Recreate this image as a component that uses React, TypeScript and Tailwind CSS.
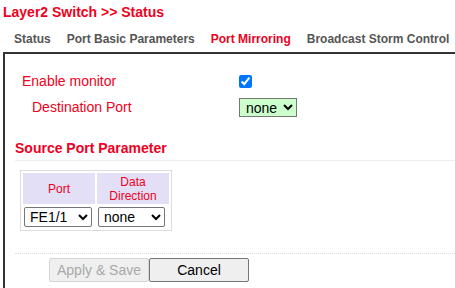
import { useState } from "react";

const tabs = [
  { label: "Status", active: false },
  { label: "Port Basic Parameters", active: false },
  { label: "Port Mirroring", active: true },
  { label: "Broadcast Storm Control", active: false },
];

export default function App() {
  const [enabled, setEnabled] = useState(true);

  return (
    <div className="w-[455px] h-[288px] overflow-hidden bg-white font-['Liberation_Sans',Arial,sans-serif]">
      <h1 className="pl-[3px] pt-[4px] text-[14px] font-bold leading-[17px] text-[#ee0022]">
        Layer2 Switch &gt;&gt; Status
      </h1>

      <div className="flex gap-[16px] pl-[14px] pt-[11px] text-[12px] font-bold leading-[15px] whitespace-nowrap">
        {tabs.map((t) => (
          <span key={t.label} className={t.active ? "text-[#ee0022]" : "text-[#555555]"}>
            {t.label}
          </span>
        ))}
      </div>

      <div className="ml-[3px] mt-[5px] w-[600px] h-[300px] border-l-2 border-t-2 border-[#333333]">
        <div className="pl-[17px] pt-[17px] text-[14px] text-[#ee0022]">
          <div className="flex items-center h-[20px]">
            <span className="w-[217px]">Enable monitor</span>
            <input
              type="checkbox"
              checked={enabled}
              onChange={(e) => setEnabled(e.target.checked)}
              className="m-0 w-[13px] h-[13px]"
            />
          </div>
          <div className="flex items-center h-[20px] mt-[6px]">
            <span className="w-[217px] pl-[10px]">Destination Port</span>
            <select className="h-[19px] w-[58px] border border-[#767676] bg-[#ccffcc] text-[14px] text-black pl-[2px]">
              <option>none</option>
            </select>
          </div>
        </div>

        <div className="mt-[23px] ml-[10px] pb-[3px] border-b border-[#eeeeee] text-[14px] font-bold text-[#ee0022] leading-[17px]">
          Source Port Parameter
        </div>

        <table className="ml-[15px] mt-[9px] border border-[#dddddd] border-separate border-spacing-[2px] text-[12px]">
          <thead>
            <tr>
              <th className="w-[72px] h-[31px] bg-[#e3dff6] font-normal text-[#ee0022] leading-[14px]">Port</th>
              <th className="w-[72px] h-[31px] bg-[#e3dff6] font-normal text-[#ee0022] leading-[14px]">
                Data
                <br />
                Direction
              </th>
            </tr>
          </thead>
          <tbody>
            <tr>
              <td className="p-0 pl-[1px] h-[22px]">
                <select className="h-[20px] w-[68px] border border-[#767676] rounded-[2px] text-[14px] text-black pl-[1px]">
                  <option>FE1/1</option>
                </select>
              </td>
              <td className="p-0 pl-[1px] h-[22px]">
                <select className="h-[20px] w-[67px] border border-[#767676] rounded-[2px] text-[14px] text-black pl-[1px]">
                  <option>none</option>
                </select>
              </td>
            </tr>
          </tbody>
        </table>

        <div className="ml-[10px] mt-[22px] border-t border-dotted border-[#dddddd]" />

        <div className="flex ml-[44px] mt-[4px]">
          <button
            disabled
            className="w-[100px] h-[24px] border border-[#d5d5d5] rounded-[2px] bg-[#efefef] text-[14px] text-[#a9a9a9]"
          >
            Apply &amp; Save
          </button>
          <button className="w-[100px] h-[24px] border border-[#767676] rounded-[2px] bg-[#efefef] text-[14px] text-black">
            Cancel
          </button>
        </div>
      </div>
    </div>
  );
}
